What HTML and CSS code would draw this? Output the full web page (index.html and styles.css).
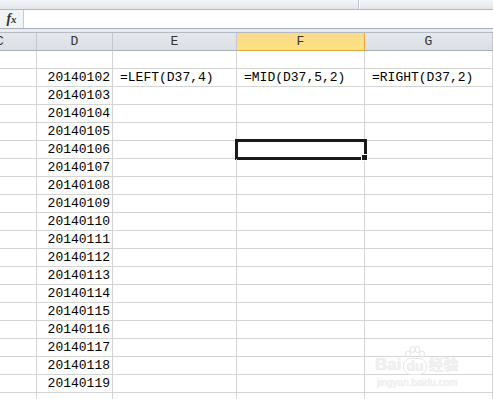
FILE: index.html
```html
<!DOCTYPE html>
<html lang="zh-CN">
<head>
  <meta charset="UTF-8">
  <meta name="viewport" content="width=device-width, initial-scale=1.0">
  <title>Sheet</title>
  <link rel="stylesheet" href="styles.css">
</head>
<body>
  <div class="app">
    <!-- Ribbon edge -->
    <div class="ribbon-strip">
      <div class="strip-left"></div>
      <div class="strip-right"></div>
    </div>

    <!-- Formula bar -->
    <div class="formula-bar">
      <div class="fx"><span class="fx-f">f</span><span class="fx-x">x</span></div>
      <div class="formula-input"></div>
    </div>
    <div class="bar-gap"></div>

    <!-- Grid -->
    <div class="sheet" id="sheet">
      <div class="col-head first"><span>C</span></div>
      <div class="col-head">D</div>
      <div class="col-head">E</div>
      <div class="col-head active">F</div>
      <div class="col-head">G</div>
    </div>

    <!-- Watermark -->
    <div class="watermark">
      <div class="wm-logo">
        <span class="wm-bai">Bai</span>
        <span class="wm-du">
          <svg class="wm-paw" width="22" height="14" viewBox="0 0 22 14">
            <ellipse cx="4" cy="8" rx="2.5" ry="3" />
            <ellipse cx="8.5" cy="3.5" rx="2.5" ry="3" />
            <ellipse cx="13.5" cy="3.5" rx="2.5" ry="3" />
            <ellipse cx="18" cy="8" rx="2.5" ry="3" />
          </svg>
          du
        </span>
        <span class="wm-cn">经验</span>
      </div>
      <div class="wm-url">jingyan.baidu.com</div>
    </div>
  </div>

  <script>
    // Fill the grid rows
    const sheet = document.getElementById('sheet');
    const rows = 20;
    for (let r = 0; r < rows; r++) {
      const cells = ['', '', '', '', ''];
      if (r >= 1 && r <= 18) {
        cells[1] = String(20140101 + r);
      }
      if (r === 1) {
        cells[2] = '=LEFT(D37,4)';
        cells[3] = '=MID(D37,5,2)';
        cells[4] = '=RIGHT(D37,2)';
      }
      cells.forEach((text, i) => {
        const cell = document.createElement('div');
        cell.className = 'cell' + (i === 1 ? ' num' : '');
        if (r === 5 && i === 3) {
          cell.className += ' selected';
        }
        cell.textContent = text;
        sheet.appendChild(cell);
      });
    }
  </script>
</body>
</html>
```

FILE: styles.css
```css
body {
  margin: 0;
  padding: 0;
  background: #fff;
  font-family: "Liberation Mono", "Noto Sans CJK SC", monospace;
}
.app {
  position: relative;
  width: 493px;
  height: 399px;
  overflow: hidden;
}
.ribbon-strip {
  display: flex;
  height: 9px;
  border-bottom: 1px solid #b3b9c2;
  background: linear-gradient(#f3f5f8, #e3e7ec);
}
.strip-left {
  width: 358px;
  border-right: 1px solid #bcc2ca;
}
.strip-right {
  flex: 1;
  border-left: 1px solid #fff;
}
.formula-bar {
  display: flex;
  height: 18px;
  border-bottom: 1px solid #a9afb8;
}
.fx {
  width: 23px;
  border-right: 1px solid #c6cbd2;
  background: #f2f3f5;
  font-family: "Liberation Serif", serif;
  font-style: italic;
  font-weight: bold;
  font-size: 14px;
  line-height: 18px;
  text-align: center;
  color: #333;
}
.fx-x {
  font-size: 11px;
}
.formula-input {
  flex: 1;
  background: #fff;
}
.bar-gap {
  height: 3px;
  background: #e8ebef;
  border-bottom: 1px solid #b5bbc3;
}
.sheet {
  display: grid;
  grid-template-columns: 37px 76px 124px 128px 1fr;
  grid-auto-rows: 18px;
}
.col-head {
  background: linear-gradient(#e4e7eb, #dcdfe4);
  border-right: 1px solid #c3c8ce;
  border-bottom: 1px solid #a9afb7;
  font-size: 13px;
  line-height: 17px;
  text-align: center;
  color: #333;
  overflow: hidden;
}
.col-head.first {
  text-align: left;
}
.col-head.first span {
  margin-left: -4px;
}
.col-head.active {
  background: linear-gradient(#f9d98d, #ffe27f);
  border-right-color: #eaa43c;
  border-bottom-color: #eaa43c;
}
.cell {
  position: relative;
  border-right: 1px solid #d4d4d4;
  border-bottom: 1px solid #d4d4d4;
  padding: 0 7px;
  font-size: 13px;
  line-height: 18px;
  color: #000;
  white-space: nowrap;
}
.cell.num {
  text-align: right;
  padding: 0 2px 0 0;
}
.cell.selected::after {
  content: "";
  position: absolute;
  left: -2px;
  top: -2px;
  right: -3px;
  bottom: -2px;
  border: 3px solid #1a1a1a;
}
.cell.selected::before {
  content: "";
  position: absolute;
  right: -4px;
  bottom: -3px;
  width: 5px;
  height: 5px;
  background: #1a1a1a;
  border: 1px solid #fff;
  z-index: 2;
}
.watermark {
  position: absolute;
  left: 375px;
  top: 355px;
  color: #f0f0f0;
  font-family: "Liberation Sans", "Noto Sans CJK SC", sans-serif;
  text-shadow: 0 0 1px #e0e0e0;
}
.wm-logo {
  display: flex;
  align-items: flex-end;
  gap: 2px;
  font-size: 17px;
  font-weight: bold;
  line-height: 20px;
}
.wm-du {
  position: relative;
  padding: 0 2px;
  border: 1px solid #e6e6e6;
  border-radius: 8px;
  font-size: 14px;
  line-height: 15px;
}
.wm-paw {
  position: absolute;
  left: 0;
  top: -13px;
  fill: none;
  stroke: #e4e4e4;
}
.wm-cn {
  font-size: 15px;
}
.wm-url {
  font-size: 10px;
  line-height: 16px;
  padding-left: 2px;
}
```
